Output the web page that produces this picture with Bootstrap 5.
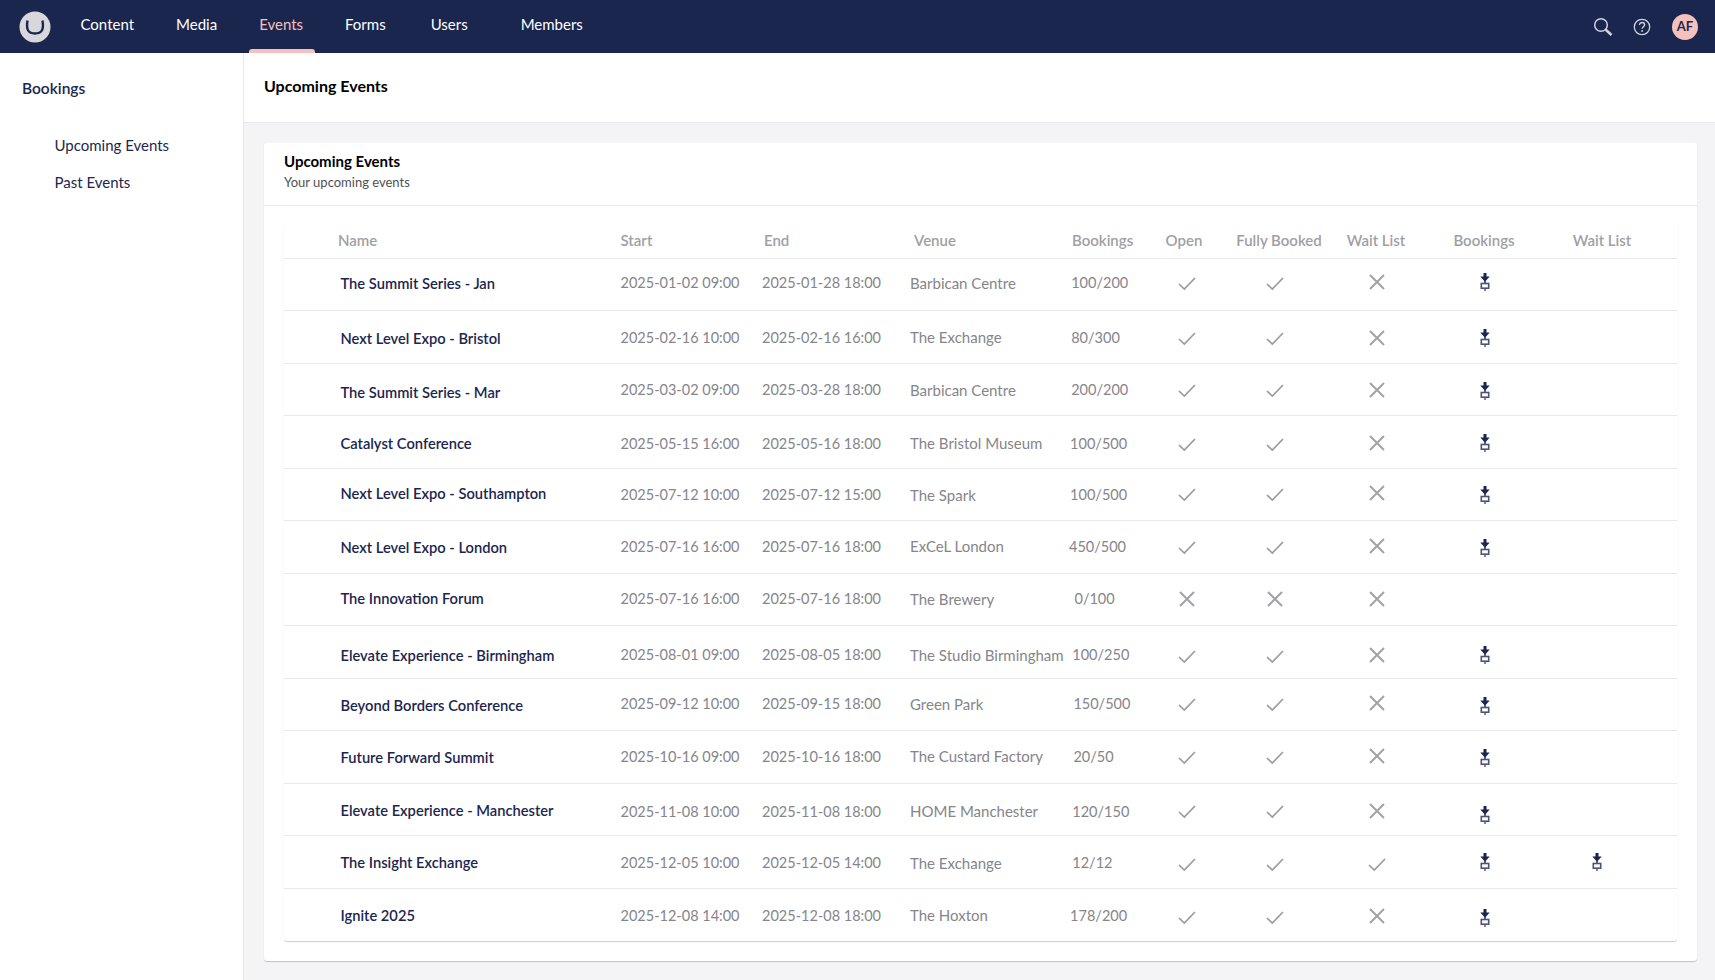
<!DOCTYPE html>
<html lang="en"><head><meta charset="utf-8"><title>Upcoming Events</title>
<link href="https://cdn.jsdelivr.net/npm/bootstrap@5.3.0/dist/css/bootstrap.min.css" rel="stylesheet">
<style>
html,body{height:100%}
body{font-family:Lato,"Liberation Sans",sans-serif;font-size:15px;background:#fff;color:#1b264f;overflow:hidden}
.topbar{height:53px;background:#1b264f;padding:0 17px 0 19px}
.brandmark{width:32px;height:32px;margin-right:8.500px;flex:none}
.topnav .nav-link{position:relative;color:#fff;padding:0 21px;line-height:49px;height:53px;font-size:15px}
.topnav .pad-users{padding-left:24px;padding-right:32px}
.topnav .nav-link.active{color:#f5c1bc}
.topnav .nav-link.active::after{content:"";position:absolute;left:11px;right:9px;bottom:0;height:4px;background:#f5c1bc;border-radius:3px 3px 0 0}
.tool{width:22px;height:22px;margin-right:19px;color:#d0d3df}
.tool-find{margin-right:17px}
.avatar{width:26px;height:26px;border-radius:50%;background:#f5c1bc;color:#1b264f;font-size:13px;font-weight:700}
.shell{height:calc(100% - 53px)}
.sidepane{width:244px;flex:none;border-right:1px solid #e9e9eb;padding:23px 22px}
.sidetitle{font-size:15.500px;font-weight:600;line-height:24px;margin-bottom:33px}
.sidelink{display:block;color:#1b264f;text-decoration:none;margin-left:32.500px;line-height:24px;margin-bottom:13px}
.mainpane{background:#f4f3f5;min-width:0}
.pagehead{height:70px;background:#fff;border-bottom:1px solid #e9e9eb;padding:0 0 3px 20px;font-size:16px;font-weight:700;color:#000}
.evcard{margin:20px 18px 0 20px;height:818px;background:#fff;border-radius:3px;box-shadow:0 1px 1px rgba(0,0,0,.2)}
.evhead{height:63px;padding:8px 20px 0;border-bottom:1px solid #e9e9eb}
.evtitle{font-size:15px;font-weight:700;color:#000;line-height:21px}
.evsub{font-size:13px;color:#515054;line-height:20px}
.evbody{padding:15px 20px 0}
.evtable{table-layout:fixed;width:1393px;margin:0;border-radius:3px;box-shadow:0 1px 1px rgba(0,0,0,.2)}
.table.evtable>*>*>*{padding:0;border-bottom:1px solid #e9e9eb;vertical-align:middle;background:transparent;color:#85858a;box-shadow:none}
.table.evtable>tbody>tr{height:52.540px}
.table.evtable>tbody>tr:last-child>*{border-bottom:0}
.table.evtable>thead th{height:37px;font-weight:600;color:#a0a0a3;font-size:15px;padding-top:2px}
.table.evtable>thead th.hname{padding-left:54px}
.table.evtable>thead th.hstart{padding-left:.5px}
.table.evtable>thead th.hend{padding-left:2px}
.table.evtable>thead th.hvenue{padding-left:4px}
.table.evtable>thead th.hbook{padding-left:3px}
.table.evtable>thead th.hfull{padding-left:6px}
.table.evtable>thead th.hlast{padding-right:17px}
.table.evtable>tbody>tr>td.cname{padding-left:56.500px;color:#1b264f;font-weight:600;font-size:14.700px}
.table.evtable>tbody>tr>td.cnum{font-size:14.500px}
.table.evtable>tbody>tr>td.cdate{padding-left:.5px}
.table.evtable>tbody>tr>td.copen{padding-left:6px}
.table.evtable>tbody>tr>td.cfull{padding-right:2px}
.table.evtable>tbody>tr>td.cwait{padding-left:2px}
.table.evtable>tbody>tr>td.cbook{padding-left:2px}
.table.evtable>tbody>tr>td.clast{padding-right:28px}
.ico{display:block;margin:0 auto}
.tick{width:18px;height:18px;color:#9b9b9f}
.cross{width:18px;height:18px;color:#a3a3a7}
.dl{width:12px;height:18px}
</style></head>
<body>
<svg width="0" height="0" class="d-none">
<symbol id="i-tick" viewBox="0 0 18 18"><path d="M1 10 6.300 15 17 4" fill="none" stroke="currentColor" stroke-width="1.700"/></symbol>
<symbol id="i-x" viewBox="0 0 18 18"><path d="M2 2 16 16M16 2 2 16" fill="none" stroke="currentColor" stroke-width="2"/></symbol>
<symbol id="i-dl" viewBox="0 0 12 18"><path d="M4.500 0h3v3.400h3.200L6 8.800 1.300 3.400h3.200z" fill="#1b264f"/><path d="M6 8v2.500" stroke="#1b264f" stroke-width="1.400"/><rect x="2.300" y="10.500" width="7.400" height="4.700" fill="#fff" stroke="#4b5379" stroke-width="1.600"/><path d="M6 15.500V18" stroke="#4b5379" stroke-width="1.400"/></symbol>
</svg>
<header class="topbar d-flex align-items-center">
<svg class="brandmark" viewBox="0 0 32 32"><circle cx="16" cy="16" r="15.500" fill="#d8d7dc"/><path d="M8.500 9.500c-.8 5-.6 8 .6 10 1.200 2 3.600 3 6.900 3s5.700-1 6.900-3c1.200-2 1.400-5 .6-10" fill="none" stroke="#1b264f" stroke-width="2.400"/></svg>
<ul class="nav topnav flex-grow-1">
<li class="nav-item"><a class="nav-link" href="#">Content</a></li>
<li class="nav-item"><a class="nav-link" href="#">Media</a></li>
<li class="nav-item"><a class="nav-link active" href="#">Events</a></li>
<li class="nav-item"><a class="nav-link" href="#">Forms</a></li>
<li class="nav-item"><a class="nav-link pad-users" href="#">Users</a></li>
<li class="nav-item"><a class="nav-link" href="#">Members</a></li>
</ul>
<svg class="tool tool-find" viewBox="0 0 22 22"><circle cx="9" cy="9" r="6.300" fill="none" stroke="currentColor" stroke-width="1.500"/><path d="M13.800 13.800 19.500 19" stroke="currentColor" stroke-width="2.600"/></svg>
<svg class="tool" viewBox="0 0 22 22"><circle cx="11" cy="11" r="7.700" fill="none" stroke="currentColor" stroke-width="1.300"/><path d="M8.500 9c0-1.600 1.100-2.500 2.600-2.500S13.600 7.400 13.600 8.800c0 1.900-2.500 1.900-2.500 3.900" fill="none" stroke="currentColor" stroke-width="1.400"/><circle cx="11.100" cy="15" r=".9" fill="currentColor"/></svg>
<div class="avatar d-flex align-items-center justify-content-center">AF</div>
</header>
<div class="shell d-flex">
<aside class="sidepane">
<div class="sidetitle">Bookings</div>
<a class="sidelink" href="#">Upcoming Events</a>
<a class="sidelink" href="#">Past Events</a>
</aside>
<main class="mainpane flex-grow-1">
<div class="pagehead d-flex align-items-center">Upcoming Events</div>
<section class="evcard">
<div class="evhead"><div class="evtitle">Upcoming Events</div><div class="evsub">Your upcoming events</div></div>
<div class="evbody">
<table class="table evtable">
<colgroup><col style="width:336px"><col style="width:142px"><col style="width:148px"><col style="width:159px"><col style="width:75px"><col style="width:80px"><col style="width:104px"><col style="width:96px"><col style="width:120px"><col style="width:133px"></colgroup>
<thead><tr><th class="hname">Name</th><th class="hstart">Start</th><th class="hend">End</th><th class="hvenue">Venue</th><th class="hbook">Bookings</th><th class="text-center">Open</th><th class="text-center hfull">Fully Booked</th><th class="text-center">Wait List</th><th class="text-center">Bookings</th><th class="text-center hlast">Wait List</th></tr></thead>
<tbody id="rows"></tbody>
</table>
</div>
</section>
</main>
</div>
<script>
const T='<svg class="ico tick"><use href="#i-tick"/></svg>',X='<svg class="ico cross"><use href="#i-x"/></svg>',D='<svg class="ico dl"><use href="#i-dl"/></svg>';
/* row data: text, flags, then measured vertical offset of each group and the bookings text inset */
const R=[["The Summit Series - Jan","2025-01-02 09:00","2025-01-28 18:00","Barbican Centre","100/200",1,1,0,1,0,-2,-2,-2,-3,-3,2],
["Next Level Expo - Bristol","2025-02-16 10:00","2025-02-16 16:00","The Exchange","80/300",1,1,0,1,0,0,0,0,0,0,2],
["The Summit Series - Mar","2025-03-02 09:00","2025-03-28 18:00","Barbican Centre","200/200",1,1,0,1,0,2,0,0,0,1,2],
["Catalyst Conference","2025-05-15 16:00","2025-05-16 18:00","The Bristol Museum","100/500",1,1,0,1,0,0,1,1,0,0,1],
["Next Level Expo - Southampton","2025-07-12 10:00","2025-07-12 15:00","The Spark","100/500",1,1,0,1,0,-2,0,-1,-2,0,1],
["Next Level Expo - London","2025-07-16 16:00","2025-07-16 18:00","ExCeL London","450/500",1,1,0,1,0,-1,-1,-1,-2,0,0],
["The Innovation Forum","2025-07-16 16:00","2025-07-16 18:00","The Brewery","0/100",0,0,0,0,0,-2,-1,-1,-1,0,5],
["Elevate Experience - Birmingham","2025-08-01 09:00","2025-08-05 18:00","The Studio Birmingham","100/250",1,1,0,1,0,2,2,3,2,2,3],
["Beyond Borders Conference","2025-09-12 10:00","2025-09-15 18:00","Green Park","150/500",1,1,0,1,0,0,-1,-1,-2,1,4],
["Future Forward Summit","2025-10-16 09:00","2025-10-16 18:00","The Custard Factory","20/50",1,1,0,1,0,-1,-1,-1,-2,0,4],
["Elevate Experience - Manchester","2025-11-08 10:00","2025-11-08 18:00","HOME Manchester","120/150",1,1,0,1,0,0,1,1,1,4,3],
["The Insight Exchange","2025-12-05 10:00","2025-12-05 14:00","The Exchange","12/12",1,1,1,1,1,-1,0,1,1,-1,3],
["Ignite 2025","2025-12-08 14:00","2025-12-08 18:00","The Hoxton","178/200",1,1,0,1,0,-1,0,1,0,2,1]];
const sh=v=>{const n=v+.7,p=(Math.abs(n)*2.190).toFixed(2);return n>0?`padding-top:${p}px`:`padding-bottom:${p}px`};
document.getElementById('rows').innerHTML=R.map(r=>{const[a,b,c,x,d,inset]=r.slice(10);
const mark=(v,cls)=>`<td class="${cls}" style="${sh(v?c:x)}">${v?T:X}</td>`;
return `<tr><td class="cname" style="${sh(a)}">${r[0]}</td><td class="cnum cdate" style="${sh(b)}">${r[1]}</td><td class="cnum" style="${sh(b)}">${r[2]}</td><td style="${sh(b)}">${r[3]}</td><td class="cnum" style="padding-left:${(inset*1.094).toFixed(1)}px;${sh(b)}">${r[4]}</td>${mark(r[5],'copen')}${mark(r[6],'cfull')}${mark(r[7],'cwait')}<td class="cbook" style="${sh(d)}">${r[8]?D:''}</td><td class="clast" style="${sh(d)}">${r[9]?D:''}</td></tr>`}).join('');
</script>
<script src="https://cdn.jsdelivr.net/npm/bootstrap@5.3.0/dist/js/bootstrap.bundle.min.js"></script>
</body></html>
